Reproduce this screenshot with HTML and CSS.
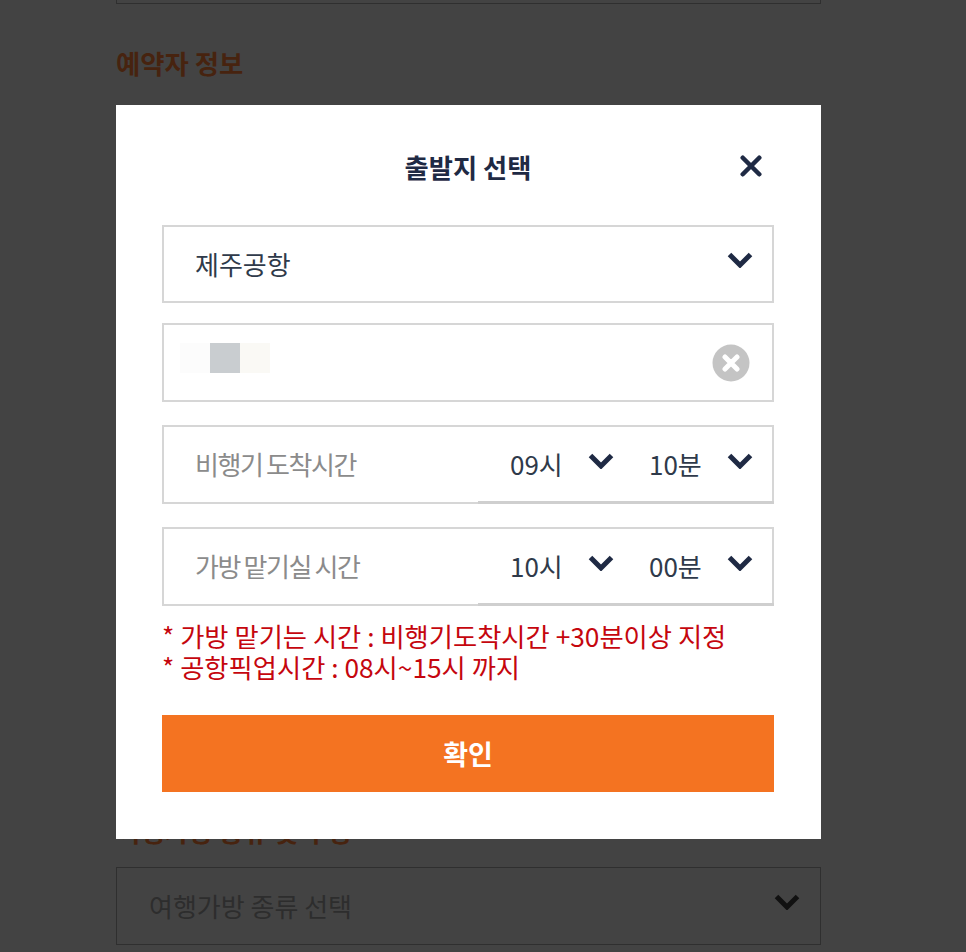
FILE: index.html
```html
<!DOCTYPE html>
<html>
<head>
  <title>출발지 선택</title>
  <link rel="stylesheet" href="styles.css">
</head>
<body>
  <div class="page">
    <div class="top-box"></div>
    <h3 class="section-title first">예약자 정보</h3>
    <h3 class="section-title second">여행가방 종류 및 수량</h3>
    <div class="bag-select">
      <span>여행가방 종류 선택</span>
      <svg class="chevron" viewBox="0 0 26 16"><path d="M2.5 2.5 13 13 23.5 2.5"/></svg>
    </div>
  </div>

  <div class="overlay">
    <div class="modal">
      <div class="modal-head">
        <h2>출발지 선택</h2>
        <svg class="close-icon" viewBox="0 0 24 24"><path d="M3 3 21 21M21 3 3 21"/></svg>
      </div>

      <div class="field">
        <span class="field-value">제주공항</span>
        <svg class="chevron" viewBox="0 0 26 16"><path d="M2.5 2.5 13 13 23.5 2.5"/></svg>
      </div>

      <div class="field field-input">
        <div class="blur">
          <span class="blur-a"></span>
          <span class="blur-b"></span>
          <span class="blur-c"></span>
        </div>
        <svg class="clear-icon" viewBox="0 0 38 38">
          <circle cx="19" cy="19" r="18.5"/>
          <path d="M13 13 25 25M25 13 13 25"/>
        </svg>
      </div>

      <div class="field field-time">
        <span class="time-label">비행기 도착시간</span>
        <div class="time-select">
          <span>09시</span>
          <svg class="chevron" viewBox="0 0 26 16"><path d="M2.5 2.5 13 13 23.5 2.5"/></svg>
        </div>
        <div class="time-select">
          <span>10분</span>
          <svg class="chevron" viewBox="0 0 26 16"><path d="M2.5 2.5 13 13 23.5 2.5"/></svg>
        </div>
      </div>

      <div class="field field-time">
        <span class="time-label">가방 맡기실 시간</span>
        <div class="time-select">
          <span>10시</span>
          <svg class="chevron" viewBox="0 0 26 16"><path d="M2.5 2.5 13 13 23.5 2.5"/></svg>
        </div>
        <div class="time-select">
          <span>00분</span>
          <svg class="chevron" viewBox="0 0 26 16"><path d="M2.5 2.5 13 13 23.5 2.5"/></svg>
        </div>
      </div>

      <div class="notice">
        <p>* 가방 맡기는 시간 : 비행기도착시간 +30분이상 지정</p>
        <p>* 공항픽업시간 : 08시~15시 까지</p>
      </div>

      <button class="btn-ok">확인</button>
    </div>
  </div>
</body>
</html>
```

FILE: styles.css
```css
body {
  font-family: "Noto Sans CJK KR", "Noto Sans", sans-serif;
  margin: 0;
  padding: 0;
  height: 952px;
  overflow: hidden;
  background-color: #434343;
}

.page {
  width: 705px;
  margin-left: 116px;
}

.top-box {
  height: 3px;
  border: 1px solid #2f2f2f;
  border-top: none;
}

.section-title {
  margin: 0;
  font-size: 26.4px;
  line-height: 36px;
  font-weight: 700;
  color: #47230f;
}

.section-title.first {
  padding-top: 41px;
}

.section-title.second {
  padding-top: 732px;
}

.bag-select {
  display: flex;
  align-items: center;
  justify-content: space-between;
  box-sizing: border-box;
  height: 78px;
  margin-top: 18px;
  padding: 0 20px 0 32px;
  border: 1px solid #2f2f2f;
  font-size: 26px;
  color: #2d2d2d;
}

.bag-select span {
  margin-bottom: 2px;
}

.bag-select .chevron path {
  stroke: #111;
}

.overlay {
  position: fixed;
  top: 105px;
  left: 116px;
}

.modal {
  box-sizing: border-box;
  width: 705px;
  height: 734px;
  padding: 0 47px 0 46px;
  background-color: #fff;
}

.modal-head {
  display: flex;
  align-items: center;
  justify-content: center;
  position: relative;
  height: 120px;
  color: #1f2a44;
}

.modal-head h2 {
  margin: 3px 0 0;
  font-size: 26.3px;
  font-weight: 700;
}

.close-icon {
  position: absolute;
  top: 50px;
  right: 12px;
  width: 22px;
  height: 22px;
}

.close-icon path {
  fill: none;
  stroke: #1f2a44;
  stroke-width: 5;
  stroke-linecap: round;
}

.field {
  display: flex;
  align-items: center;
  justify-content: space-between;
  box-sizing: border-box;
  height: 78px;
  margin-bottom: 20px;
  padding: 0 19px 0 31px;
  border: 2px solid #d6d6d6;
  font-size: 26px;
  color: #2f3a4a;
}

.field-value {
  margin-bottom: 2px;
}

.chevron {
  width: 26px;
  height: 16px;
  margin-bottom: 8px;
}

.chevron path {
  fill: none;
  stroke: #1f2a44;
  stroke-width: 5;
}

.field-input {
  height: 79px;
  margin-bottom: 23px;
  padding-left: 16px;
  padding-right: 22px;
}

.blur {
  display: flex;
  margin-bottom: 9px;
}

.blur span {
  width: 30px;
  height: 30px;
}

.blur-a {
  background-color: #fcfcfc;
}

.blur-b {
  background-color: #c9cdd0;
}

.blur-c {
  background-color: #faf9f5;
}

.clear-icon {
  width: 38px;
  height: 38px;
}

.clear-icon circle {
  fill: #c4c4c4;
}

.clear-icon path {
  fill: none;
  stroke: #fff;
  stroke-width: 5;
  stroke-linecap: round;
}

.field-time {
  position: relative;
  height: 79px;
  margin-bottom: 23px;
}

.field-time::after {
  content: "";
  position: absolute;
  left: 314px;
  right: -2px;
  bottom: -2px;
  height: 3px;
  background-color: #cfcfcf;
}

.time-label {
  flex: 1;
  margin-bottom: 2px;
  color: #8b8b8b;
  letter-spacing: -1.4px;
  word-spacing: -1px;
}

.time-select {
  display: flex;
  align-items: center;
  justify-content: space-between;
  width: 104px;
  padding-left: 35px;
}

.time-select:first-of-type {
  padding-left: 0;
}

.time-select span {
  margin-bottom: 2px;
}

.notice {
  margin-top: -9px;
  color: #c5060e;
  font-size: 26.3px;
  line-height: 31px;
}

.notice p {
  margin: 0;
}

.btn-ok {
  display: block;
  width: 100%;
  height: 77px;
  margin-top: 33px;
  background-color: #f47321;
  color: #fff;
  border: none;
  font-family: inherit;
  font-size: 27px;
  font-weight: 700;
}
```
